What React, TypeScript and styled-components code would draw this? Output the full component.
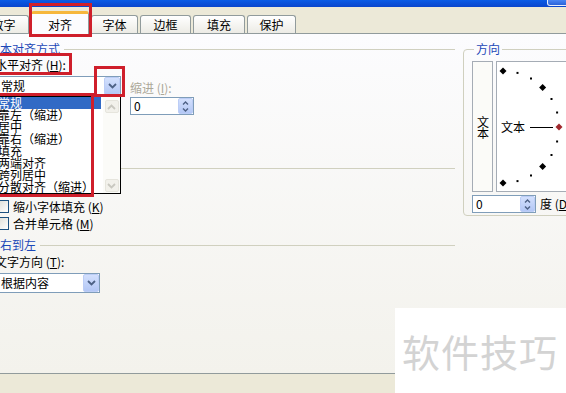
import React from 'react';
import styled, { createGlobalStyle } from 'styled-components';

const GlobalStyle = createGlobalStyle`
  html, body {
    margin: 0;
    padding: 0;
  }
  body {
    font-family: "Noto Sans CJK SC", "Liberation Sans", sans-serif;
    font-size: 12px;
    color: #000;
    background: #ece9d8;
  }
`;

const Screen = styled.div`
  position: relative;
  width: 566px;
  height: 393px;
  overflow: hidden;
  background: #ece9d8;
  display: flex;
  flex-direction: column;
`;

const TitleBar = styled.div`
  flex: none;
  height: 7px;
  background: linear-gradient(#0b5ce6, #0a45cc);
  display: flex;
  justify-content: flex-end;
`;

const TitleButton = styled.div`
  width: 20px;
  height: 5px;
  margin-right: -3px;
  border: 1px solid #e8eefc;
  border-top: none;
  border-radius: 0 0 3px 3px;
  background: linear-gradient(#4a86f4, #2b62d8);
`;

const TabStrip = styled.div`
  flex: none;
  height: 26px;
  margin-left: -22px;
  display: flex;
  align-items: flex-end;
  gap: 2px;
  position: relative;
  z-index: 1;
`;

const Tab = styled.div<{ $active?: boolean; $w: number }>`
  width: ${(p) => p.$w}px;
  height: ${(p) => (p.$active ? 23 : 18)}px;
  margin-bottom: ${(p) => (p.$active ? -1 : 0)}px;
  box-sizing: border-box;
  border: 1px solid #919b9c;
  border-bottom: none;
  border-top: ${(p) => (p.$active ? '3px solid #f6b73c' : '1px solid #919b9c')};
  border-radius: 3px 3px 0 0;
  background: ${(p) => (p.$active ? '#fcfcfe' : 'linear-gradient(#ffffff, #ecebe5)')};
  padding-top: ${(p) => (p.$active ? 2 : 1)}px;
  display: flex;
  align-items: center;
  justify-content: center;
  line-height: 14px;
  white-space: nowrap;
`;

const Panel = styled.div`
  flex: none;
  height: 341px;
  box-sizing: border-box;
  border-top: 1px solid #919b9c;
  border-bottom: 1px solid #919b9c;
  background: linear-gradient(#fcfcfe, #f3f2ec);
  display: flex;
  align-items: flex-start;
  gap: 8px;
`;

const LeftColumn = styled.div`
  flex: none;
  width: 467px;
  margin-left: -12px;
  display: flex;
  flex-direction: column;
`;

const SectionHeader = styled.div<{ $top: number }>`
  margin-top: ${(p) => p.$top}px;
  height: 14px;
  display: flex;
  align-items: center;
  gap: 4px;
  color: #1c48b8;
  line-height: 14px;
  white-space: nowrap;

  &::after {
    content: '';
    flex: 1;
    height: 1px;
    background: #d0d0bf;
  }
`;

const Indented = styled.div`
  padding-left: 7px;
  display: flex;
  flex-direction: column;
`;

const FieldLabel = styled.div<{ $top: number; $disabled?: boolean }>`
  margin-top: ${(p) => p.$top}px;
  height: 14px;
  line-height: 14px;
  color: ${(p) => (p.$disabled ? '#aca899' : '#000')};
  white-space: nowrap;
`;

const AlignRow = styled.div`
  margin-top: 4px;
  display: flex;
  align-items: flex-start;
  gap: 9px;
`;

const IndentGroup = styled.div`
  margin-top: 5px;
  display: flex;
  flex-direction: column;
  gap: 2px;
`;

const ComboBox = styled.div<{ $w: number; $top?: number }>`
  margin-top: ${(p) => p.$top ?? 0}px;
  width: ${(p) => p.$w}px;
  height: 20px;
  box-sizing: border-box;
  border: 1px solid #7f9db9;
  background: #fff;
  display: flex;
  align-items: center;
  padding: 0 0 0 5px;
`;

const ComboText = styled.span`
  flex: 1;
  line-height: 14px;
  white-space: nowrap;
`;

const DropButton = styled.div`
  width: 16px;
  height: 18px;
  box-sizing: border-box;
  border: 1px solid #bccdf6;
  border-radius: 2px;
  background: linear-gradient(#d3e0fd, #b3c7f5);
  display: flex;
  align-items: center;
  justify-content: center;
`;

const SpinBox = styled.div<{ $w: number }>`
  width: ${(p) => p.$w}px;
  height: 18px;
  box-sizing: border-box;
  border: 1px solid #7f9db9;
  background: #fff;
  display: flex;
  align-items: center;
  padding-left: 3px;
`;

const SpinValue = styled.span`
  flex: 1;
  line-height: 14px;
`;

const SpinButtons = styled.div`
  width: 15px;
  height: 16px;
  display: flex;
  flex-direction: column;
  border-radius: 2px;
  border: 1px solid #bccdf6;
  box-sizing: border-box;
  background: linear-gradient(#d3e0fd, #b3c7f5);
`;

const SpinHalf = styled.div`
  flex: 1;
  display: flex;
  align-items: center;
  justify-content: center;
`;

const CheckRow = styled.div<{ $top: number }>`
  margin-top: ${(p) => p.$top}px;
  height: 13px;
  padding-left: 8px;
  display: flex;
  align-items: center;
  gap: 4px;
  line-height: 13px;
  white-space: nowrap;
`;

const CheckBox = styled.span`
  flex: none;
  width: 13px;
  height: 13px;
  box-sizing: border-box;
  border: 1px solid #1c5180;
  background: linear-gradient(135deg, #dcdcd5, #ffffff);
`;

const Group = styled.fieldset`
  flex: none;
  margin: 8px 0 0 0;
  padding: 5px 0 2px 8px;
  width: 124px;
  min-width: 0;
  border: 1px solid #d0d0bf;
  border-radius: 4px;
`;

const GroupLegend = styled.legend`
  margin-left: 2px;
  padding: 0 2px;
  color: #1c48b8;
  line-height: 14px;
`;

const DialRow = styled.div`
  display: flex;
  gap: 3px;
`;

const VerticalBox = styled.div`
  width: 24px;
  height: 131px;
  box-sizing: border-box;
  border: 1px solid #a5acb5;
  background: #fbfbf8;
  display: flex;
  align-items: center;
  justify-content: center;
`;

const VerticalText = styled.span`
  writing-mode: vertical-rl;
  text-orientation: upright;
  line-height: 12px;
  letter-spacing: -1px;
`;

const DialBox = styled.div`
  width: 100px;
  height: 131px;
  box-sizing: border-box;
  border: 1px solid #a5acb5;
  background: #fff;
  flex: none;
`;

const DegreeRow = styled.div`
  margin-top: 3px;
  display: flex;
  align-items: center;
  gap: 4px;
  white-space: nowrap;
  line-height: 14px;
`;

const DropList = styled.div`
  position: absolute;
  left: -5px;
  top: 96px;
  width: 126px;
  height: 98px;
  box-sizing: border-box;
  border: 1px solid #000;
  background: #fff;
  display: flex;
  z-index: 2;
`;

const ListItems = styled.div`
  flex: 1;
  display: flex;
  flex-direction: column;
  padding-right: 2px;
`;

const ListItem = styled.div<{ $selected?: boolean }>`
  height: 12px;
  line-height: 12px;
  padding-left: 2px;
  white-space: nowrap;
  background: ${(p) => (p.$selected ? '#316ac5' : 'transparent')};
  color: ${(p) => (p.$selected ? '#fff' : '#000')};
`;

const ListScroll = styled.div`
  width: 17px;
  display: flex;
  flex-direction: column;
  justify-content: space-between;
  align-items: center;
  padding: 3px 0 1px;
  background: #fbfbf8;
`;

const ScrollArrow = styled.div`
  width: 14px;
  height: 13px;
  box-sizing: border-box;
  border: 1px solid #e6e5dd;
  border-radius: 2px;
  background: #f2f1eb;
  display: flex;
  align-items: center;
  justify-content: center;
`;

const Mark = styled.div<{ $x: number; $y: number; $w: number; $h: number }>`
  position: absolute;
  left: ${(p) => p.$x}px;
  top: ${(p) => p.$y}px;
  width: ${(p) => p.$w}px;
  height: ${(p) => p.$h}px;
  box-sizing: border-box;
  border: 3px solid #cf1f2b;
  z-index: 3;
`;

const Watermark = styled.div`
  position: absolute;
  left: 395px;
  top: 308px;
  width: 180px;
  height: 90px;
  background: #fff;
  z-index: 4;
  padding: 24px 0 0 7px;
  box-sizing: border-box;
  font-size: 38px;
  line-height: 38px;
  letter-spacing: 1px;
  color: #d3d3d3;
  white-space: nowrap;
`;

const Chevron = ({ dir = 'down', color = '#4d6185' }: { dir?: 'up' | 'down'; color?: string }) => (
  <svg width="9" height="6" viewBox="0 0 9 6">
    <path
      d={dir === 'down' ? 'M1 1 L4.5 4.5 L8 1' : 'M1 5 L4.5 1.5 L8 5'}
      fill="none"
      stroke={color}
      strokeWidth="1.8"
    />
  </svg>
);

const SmallChevron = ({ dir }: { dir: 'up' | 'down' }) => (
  <svg width="7" height="4" viewBox="0 0 7 4">
    <path d={dir === 'down' ? 'M1 0.5 L3.5 3 L6 0.5' : 'M1 3.5 L3.5 1 L6 3.5'} fill="none" stroke="#4d6185" strokeWidth="1.4" />
  </svg>
);

const Combo = ({ value, width, top }: { value: string; width: number; top?: number }) => (
  <ComboBox $w={width} $top={top}>
    <ComboText>{value}</ComboText>
    <DropButton>
      <Chevron />
    </DropButton>
  </ComboBox>
);

const Spin = ({ width }: { width: number }) => (
  <SpinBox $w={width}>
    <SpinValue>0</SpinValue>
    <SpinButtons>
      <SpinHalf>
        <SmallChevron dir="up" />
      </SpinHalf>
      <SpinHalf>
        <SmallChevron dir="down" />
      </SpinHalf>
    </SpinButtons>
  </SpinBox>
);

const Dial = () => {
  const cx = 6;
  const cy = 65;
  const r = 56;
  const angles = [90, 75, 60, 45, 30, 15, 0, -15, -30, -45, -60, -75, -90];
  return (
    <svg width="98" height="129" viewBox="0 0 98 129">
      {angles.map((a) => {
        const x = cx + r * Math.cos((a * Math.PI) / 180);
        const y = cy - r * Math.sin((a * Math.PI) / 180);
        if (a % 45 === 0) {
          const s = 3.5;
          return (
            <polygon
              key={a}
              points={`${x},${y - s} ${x + s},${y} ${x},${y + s} ${x - s},${y}`}
              fill={a === 0 ? '#a0282d' : '#000'}
            />
          );
        }
        return <rect key={a} x={x - 1} y={y - 1} width="2" height="2" fill="#000" />;
      })}
      <text x="4" y="69.5" fontSize="12" fontFamily="Noto Sans CJK SC, sans-serif" fill="#000">
        文本
      </text>
      <line x1="33" y1="65.5" x2="56" y2="65.5" stroke="#000" strokeWidth="1" />
    </svg>
  );
};

const tabs = [
  { label: '数字', w: 51 },
  { label: '对齐', w: 58, active: true },
  { label: '字体', w: 47 },
  { label: '边框', w: 51 },
  { label: '填充', w: 52 },
  { label: '保护', w: 49 },
];

const options = ['常规', '靠左（缩进）', '居中', '靠右（缩进）', '填充', '两端对齐', '跨列居中', '分散对齐（缩进）'];

export default function App() {
  return (
    <Screen>
      <GlobalStyle />
      <TitleBar>
        <TitleButton />
      </TitleBar>
      <TabStrip>
        {tabs.map((t) => (
          <Tab key={t.label} $w={t.w} $active={t.active}>
            {t.label}
          </Tab>
        ))}
      </TabStrip>
      <Panel>
        <LeftColumn>
          <SectionHeader $top={8}>文本对齐方式</SectionHeader>
          <Indented>
            <FieldLabel $top={2}>
              水平对齐 (<u>H</u>):
            </FieldLabel>
            <AlignRow>
              <Combo value="常规" width={126} />
              <IndentGroup>
                <FieldLabel $top={0} $disabled>
                  缩进 (<u>I</u>):
                </FieldLabel>
                <Spin width={64} />
              </IndentGroup>
            </AlignRow>
          </Indented>
          <SectionHeader $top={46}>文本控制</SectionHeader>
          <CheckRow $top={25}>
            <CheckBox />
            <span>
              缩小字体填充 (<u>K</u>)
            </span>
          </CheckRow>
          <CheckRow $top={4}>
            <CheckBox />
            <span>
              合并单元格 (<u>M</u>)
            </span>
          </CheckRow>
          <SectionHeader $top={8}>从右到左</SectionHeader>
          <Indented>
            <FieldLabel $top={3}>
              文字方向 (<u>T</u>):
            </FieldLabel>
            <Combo value="根据内容" width={105} top={4} />
          </Indented>
        </LeftColumn>
        <Group>
          <GroupLegend>方向</GroupLegend>
          <DialRow>
            <VerticalBox>
              <VerticalText>文本</VerticalText>
            </VerticalBox>
            <DialBox>
              <Dial />
            </DialBox>
          </DialRow>
          <DegreeRow>
            <Spin width={64} />
            <span>
              度 (<u>D</u>)
            </span>
          </DegreeRow>
        </Group>
      </Panel>

      <DropList>
        <ListItems>
          {options.map((o, i) => (
            <ListItem key={o} $selected={i === 0}>
              {o}
            </ListItem>
          ))}
        </ListItems>
        <ListScroll>
          <ScrollArrow>
            <Chevron dir="up" color="#c9c8c0" />
          </ScrollArrow>
          <ScrollArrow>
            <Chevron dir="down" color="#c9c8c0" />
          </ScrollArrow>
        </ListScroll>
      </DropList>

      <Mark $x={29} $y={3} $w={63} $h={34} />
      <Mark $x={-10} $y={53} $w={82} $h={22} />
      <Mark $x={94} $y={66} $w={31} $h={31} />
      <Mark $x={-10} $y={93} $w={104} $h={104} />

      <Watermark>软件技巧</Watermark>
    </Screen>
  );
}
